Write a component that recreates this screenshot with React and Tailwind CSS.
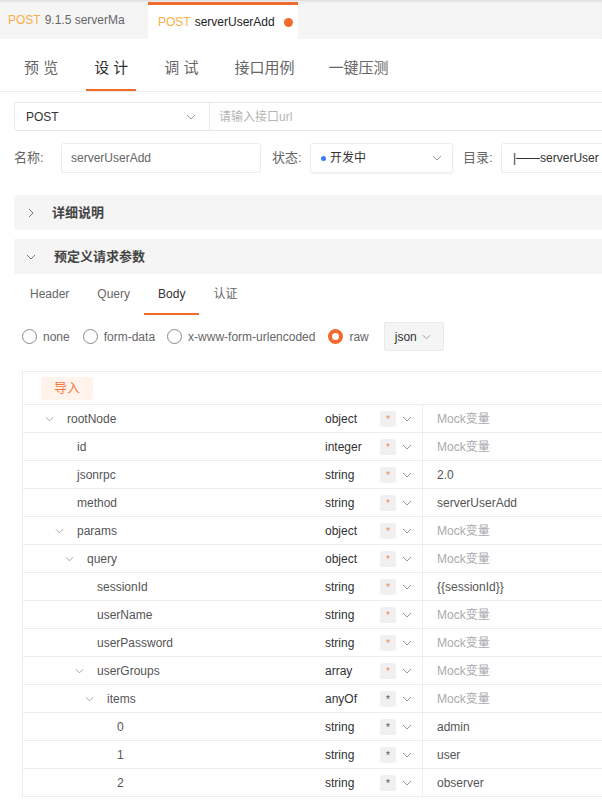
import React from 'react';

const FONT = 'font-["Liberation_Sans","Noto_Sans_CJK_SC",sans-serif]';

const indent = ['pl-[22px]', 'pl-[32px]', 'pl-[42px]', 'pl-[52px]', 'pl-[62px]', 'pl-[72px]'];

const rows = [
  { name: 'rootNode', level: 0, type: 'object', open: true },
  { name: 'id', level: 1, type: 'integer' },
  { name: 'jsonrpc', level: 1, type: 'string', value: '2.0' },
  { name: 'method', level: 1, type: 'string', value: 'serverUserAdd' },
  { name: 'params', level: 1, type: 'object', open: true },
  { name: 'query', level: 2, type: 'object', open: true },
  { name: 'sessionId', level: 3, type: 'string', value: '{{sessionId}}' },
  { name: 'userName', level: 3, type: 'string' },
  { name: 'userPassword', level: 3, type: 'string' },
  { name: 'userGroups', level: 3, type: 'array', open: true },
  { name: 'items', level: 4, type: 'anyOf', open: true, plain: true },
  { name: '0', level: 5, type: 'string', value: 'admin', plain: true },
  { name: '1', level: 5, type: 'string', value: 'user', plain: true },
  { name: '2', level: 5, type: 'string', value: 'observer', plain: true },
];

function Chevron({ className = '', dir = 'down', w = 10, color = '#9a9a9a' }) {
  const d = dir === 'down' ? 'M1 1 L5 5 L9 1' : 'M1 1 L5 5 L1 9';
  const vb = dir === 'down' ? '0 0 10 6' : '0 0 6 10';
  return (
    <svg className={`shrink-0 ${className}`} width={dir === 'down' ? w : 6} height={dir === 'down' ? 6 : 10} viewBox={vb} fill="none">
      <path d={d} stroke={color} strokeWidth="1" />
    </svg>
  );
}

function Radio({ label, checked }) {
  return (
    <div className="flex items-center shrink-0">
      {checked ? (
        <span className="w-[15px] h-[15px] rounded-full border-[4px] border-[#f26b2e] bg-white" />
      ) : (
        <span className="w-[15px] h-[15px] rounded-full border border-[#8a8a8a] bg-white" />
      )}
      <span className="ml-[6px] text-[12px] text-[#666] whitespace-nowrap">{label}</span>
    </div>
  );
}

export default function App() {
  return (
    <div className={`w-[602px] h-[812px] overflow-hidden bg-white ${FONT}`}>
      {/* file tabs */}
      <div className="h-[39px] bg-[#f5f5f5] flex shadow-[inset_0_3px_3px_-2px_rgba(0,0,0,0.12)]">
        <div className="w-[148px] flex items-center pl-[8px] text-[12px] whitespace-nowrap">
          <span className="text-[#f9ae45]">POST</span>
          <span className="ml-[4px] text-[#666]">9.1.5 serverMa</span>
        </div>
        <div className="w-[150px] mt-[2px] bg-white border-t-[3px] border-[#f26b2e] flex items-center pl-[10px] text-[12px] whitespace-nowrap">
          <span className="text-[#f9ae45]">POST</span>
          <span className="ml-[4px] text-[#222]">serverUserAdd</span>
          <span className="ml-[9px] w-[9px] h-[9px] rounded-full bg-[#f26b2e]" />
        </div>
      </div>

      {/* page tabs */}
      <div className="h-[53px] border-b border-[#ececec] flex pl-[16px] gap-[20px] text-[15px]">
        {['预 览', '设 计', '调 试', '接口用例', '一键压测'].map((t, i) => (
          <div
            key={t}
            className={`h-full flex items-center pt-[8px] px-[8px] border-b-[2px] ${
              i === 1 ? 'border-[#f26b2e] text-[#333]' : 'border-transparent text-[#666]'
            } ${i === 4 ? '-ml-[2px]' : ''}`}
          >
            {t}
          </div>
        ))}
      </div>

      <div className="pl-[14px] w-[620px]">
        {/* url row */}
        <div className="mt-[10px] w-[600px] h-[29px] flex border border-[#e8e8e8] rounded-[3px] text-[12px]">
          <div className="w-[195px] shrink-0 flex items-center justify-between pl-[11px] pr-[13px] border-r border-[#e8e8e8] text-[#333]">
            <span>POST</span>
            <Chevron />
          </div>
          <div className="flex items-center pl-[9px] text-[#b5b5b5]">请输入接口url</div>
        </div>

        {/* name row */}
        <div className="mt-[12px] h-[30px] flex items-center text-[12px]">
          <span className="w-[47px] shrink-0 text-[#666] text-[13px]">名称:</span>
          <div className="w-[200px] shrink-0 h-full flex items-center pl-[9px] border border-[#ececec] rounded-[3px] text-[#666]">serverUserAdd</div>
          <span className="ml-[11px] w-[38px] shrink-0 text-[#666] text-[13px]">状态:</span>
          <div className="w-[143px] shrink-0 h-full flex items-center justify-between pl-[10px] pr-[10px] border border-[#ececec] rounded-[3px] shadow-[0_1px_2px_rgba(0,0,0,0.06)]">
            <span className="flex items-center text-[#333]">
              <span className="w-[5px] h-[5px] rounded-full bg-[#3b7cf5]" />
              <span className="ml-[4px]">开发中</span>
            </span>
            <Chevron />
          </div>
          <span className="ml-[10px] w-[38px] shrink-0 text-[#666] text-[13px]">目录:</span>
          <div className="w-[140px] shrink-0 h-full flex items-center pl-[11px] border border-[#ececec] rounded-[3px] text-[#333] whitespace-nowrap">
            |——serverUser
          </div>
        </div>

        {/* collapsibles */}
        <div className="mt-[22px] w-[600px] h-[35px] bg-[#f5f5f5] rounded-[3px] flex items-center pl-[14px]">
          <Chevron dir="right" color="#777" />
          <span className="ml-[18px] text-[13px] font-semibold text-[#444]">详细说明</span>
        </div>
        <div className="mt-[9px] w-[600px] h-[35px] bg-[#f5f5f5] flex items-center pl-[12px]">
          <Chevron w={10} color="#777" />
          <span className="ml-[18px] text-[13px] font-semibold text-[#444]">预定义请求参数</span>
        </div>

        {/* body tabs */}
        <div className="h-[41px] flex pl-[2px] text-[12px]">
          {['Header', 'Query', 'Body', '认证'].map((t) => (
            <div
              key={t}
              className={`h-full flex items-center px-[14px] border-b-[2px] ${
                t === 'Body' ? 'border-[#f26b2e] text-[#333]' : 'border-transparent text-[#666]'
              }`}
            >
              {t}
            </div>
          ))}
        </div>

        {/* body type */}
        <div className="mt-[7px] h-[29px] flex items-center pl-[8px]">
          <Radio label="none" />
          <div className="ml-[13px]"><Radio label="form-data" /></div>
          <div className="ml-[12px]"><Radio label="x-www-form-urlencoded" /></div>
          <div className="ml-[13px]"><Radio label="raw" checked /></div>
          <div className="ml-[15px] w-[60px] shrink-0 h-[29px] bg-[#f5f5f5] border border-[#eaeaea] rounded-[2px] flex items-center pl-[10px] text-[12px] text-[#333]">
            json
            <Chevron className="ml-[5px]" w={9} />
          </div>
        </div>

        {/* schema table */}
        <div className="mt-[20px] ml-[8px] w-[600px] border-l border-t border-b border-[#ececec] text-[12px]">
          <div className="h-[32px] flex items-center pl-[18px]">
            <span className="w-[52px] h-[23px] rounded-[3px] bg-[#fff3eb] text-[#f5773d] text-[13px] flex items-center justify-center">导入</span>
          </div>
          {rows.map((r) => (
            <div key={r.name} className="h-[28px] flex border-t border-[#ececec]">
              <div className={`w-[302px] shrink-0 flex items-center ${indent[r.level]}`}>
                <span className="w-[22px] flex">
                  {r.open && <Chevron w={9} />}
                </span>
                <span className="text-[#555]">{r.name}</span>
              </div>
              <div className="w-[98px] shrink-0 flex items-center border-r border-[#ececec]">
                <span className="w-[55px] text-[#333]">{r.type}</span>
                <span className={`w-[16px] h-[16px] rounded-[2px] bg-[#f0f0f0] flex items-center justify-center text-[10px] leading-none pt-[3px] ${r.plain ? 'text-[#555]' : 'text-[#f28a5a]'}`}>*</span>
                <Chevron className="ml-[6px]" w={10} />
              </div>
              <div className="flex items-center pl-[14px]">
                {r.value ? <span className="text-[#555]">{r.value}</span> : <span className="text-[#aaa]">Mock变量</span>}
              </div>
            </div>
          ))}
        </div>
      </div>
    </div>
  );
}
